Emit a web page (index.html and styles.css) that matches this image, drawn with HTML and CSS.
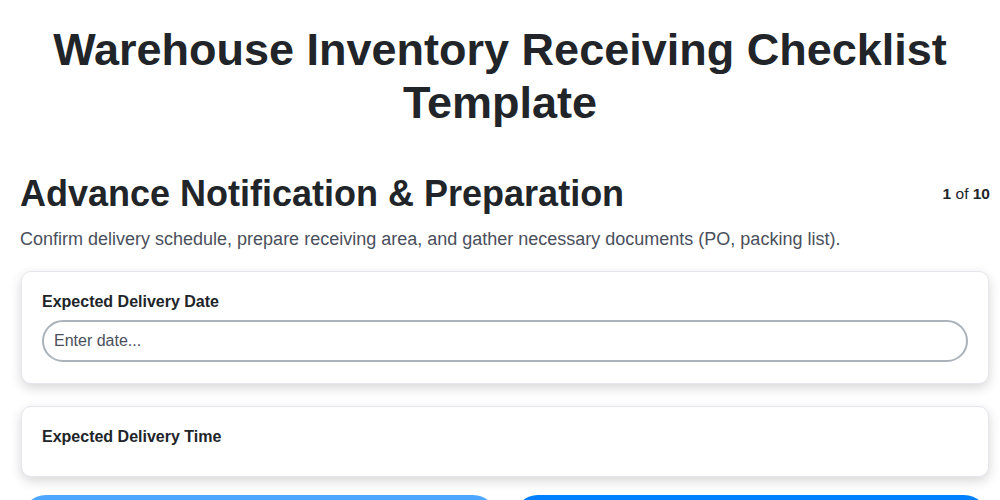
FILE: index.html
```html
<!DOCTYPE html>
<html lang="en">
<head>
<meta charset="utf-8">
<title>Warehouse Inventory Receiving Checklist Template</title>
<link rel="stylesheet" href="styles.css">
</head>
<body>
<div class="page">
  <h1 class="title">Warehouse Inventory Receiving Checklist Template</h1>
  <div class="section-head">
    <h2 class="section-title">Advance Notification &amp; Preparation</h2>
    <div class="counter"><strong>1</strong> of <strong>10</strong></div>
  </div>
  <p class="section-desc">Confirm delivery schedule, prepare receiving area, and gather necessary documents (PO, packing list).</p>
  <div class="card">
    <label class="field-label" for="date">Expected Delivery Date</label>
    <input class="field-input" id="date" type="text" placeholder="Enter date...">
  </div>
  <div class="card card-last">
    <label class="field-label">Expected Delivery Time</label>
  </div>
  <div class="nav">
    <button class="btn btn-prev">Previous</button>
    <button class="btn btn-next">Next</button>
  </div>
</div>
</body>
</html>
```
FILE: styles.css
```css
* { box-sizing: border-box; }
body {
  margin: 0;
  font-family: "Liberation Sans", Arial, sans-serif;
  color: #212529;
  background: #fff;
}
.page {
  padding: 0 10px 0 20px;
}
.title {
  margin: 0 0 0 -10px;
  padding-top: 23px;
  font-size: 45px;
  line-height: 53px;
  font-weight: 700;
  text-align: center;
}
.section-head {
  display: flex;
  justify-content: space-between;
  align-items: center;
  margin-top: 44px;
}
.section-title {
  margin: 0;
  font-size: 36px;
  line-height: 42px;
  font-weight: 700;
}
.counter {
  font-size: 15.5px;
  color: #212529;
}
.section-desc {
  margin: 13px 0 21px;
  font-size: 18px;
  line-height: 22px;
  color: #4a4f5c;
}
.card {
  margin: 0 1px 22px 1px;
  padding: 20px 20px 21px 20px;
  background: #fff;
  border: 1px solid #e6e6ec;
  border-radius: 10px;
  box-shadow: 0 4px 12px rgba(0, 0, 0, 0.16);
}
.card-last { margin-bottom: 18px; }
.field-label {
  display: block;
  font-size: 16px;
  line-height: 19px;
  font-weight: 700;
  color: #212529;
  margin-bottom: 9px;
}
.field-input {
  display: block;
  width: 100%;
  height: 42px;
  padding: 0 10px;
  border: 2px solid #aab2bb;
  border-radius: 21px;
  font-family: "Liberation Sans", Arial, sans-serif;
  font-size: 16px;
  color: #212529;
  background: #fff;
  outline: none;
}
.field-input::placeholder { color: #4a4f5c; }
.nav {
  display: flex;
  gap: 17px;
  margin: 0 2px;
}
.btn {
  flex: 1;
  height: 48px;
  border: none;
  border-radius: 24px;
  color: #fff;
  font-family: "Liberation Sans", Arial, sans-serif;
  font-size: 16px;
  font-weight: 700;
}
.btn-prev { background: #4da6ff; }
.btn-next { background: #0080ff; }
```
